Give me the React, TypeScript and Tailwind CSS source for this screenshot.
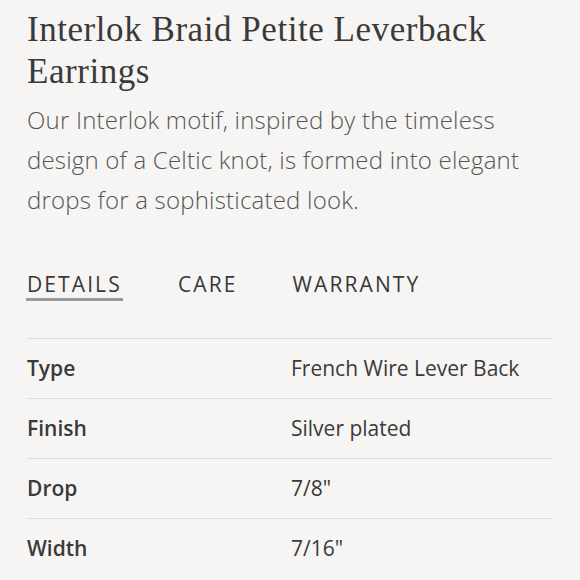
import React from "react";

const rows: [string, string][] = [
  ["Type", "French Wire Lever Back"],
  ["Finish", "Silver plated"],
  ["Drop", '7/8"'],
  ["Width", '7/16"'],
];

export default function App() {
  return (
    <div className="w-[580px] h-[580px] overflow-hidden bg-[#f6f5f3] pl-[27px] pr-[27px]">
      <h1
        className="pt-[9px] text-[35px] leading-[42px] tracking-[0.55px] text-[#3a3a3a] font-normal"
        style={{ fontFamily: '"Liberation Serif", serif' }}
      >
        Interlok Braid Petite Leverback Earrings
      </h1>
      <p
        className="mt-[7px] text-[24px] leading-[40px] tracking-[0.2px] text-[#555555] font-light"
        style={{ fontFamily: '"Open Sans", sans-serif' }}
      >
        Our Interlok motif, inspired by the timeless design of a Celtic knot, is formed into elegant drops for a sophisticated look.
      </p>
      <div
        className="mt-[50px] flex text-[21px] tracking-[0.1em] text-[#383838]"
        style={{ fontFamily: '"Open Sans", sans-serif' }}
      >
        <div className="flex flex-col">
          <span className="leading-[28px]">DETAILS</span>
          <span className="h-[3px] w-[97px] -ml-[1px] bg-[#9a9a9a]" />
        </div>
        <span className="ml-[55px] leading-[28px]">CARE</span>
        <span className="ml-[55px] leading-[28px]">WARRANTY</span>
      </div>
      <div
        className="mt-[37px] border-t border-[#dcdcdc] divide-y divide-[#dcdcdc]"
        style={{ fontFamily: '"Open Sans", sans-serif' }}
      >
        {rows.map(([k, v]) => (
          <div key={k} className="grid grid-cols-2 h-[60px] items-center text-[21px] text-[#3a3a3a]">
            <span className="font-semibold">{k}</span>
            <span className="pl-[1px]">{v}</span>
          </div>
        ))}
      </div>
    </div>
  );
}
